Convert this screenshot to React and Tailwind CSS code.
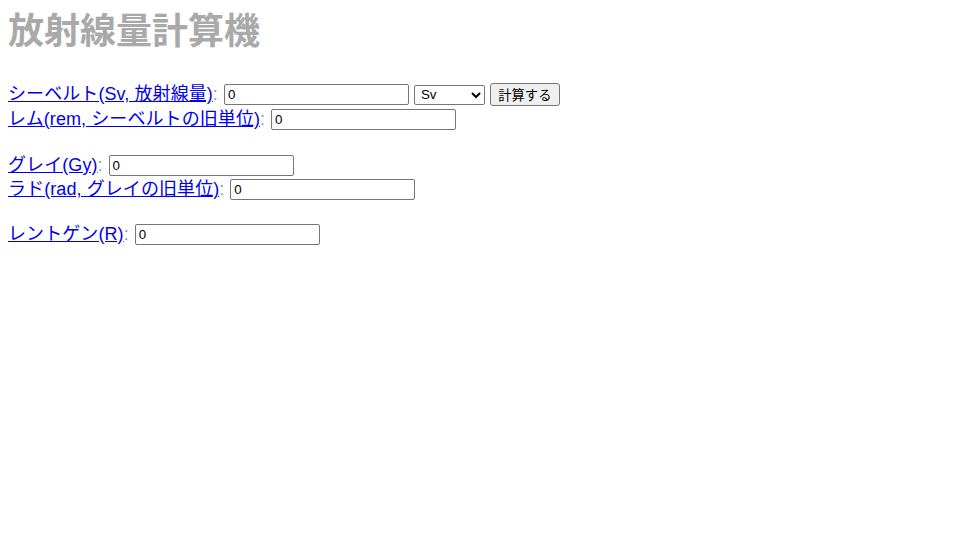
const rows = [
  { label: "シーベルト(Sv, 放射線量)", mt: "mt-[29px]", select: true },
  { label: "レム(rem, シーベルトの旧単位)", mt: "mt-0" },
  { label: "グレイ(Gy)", mt: "mt-[21px]" },
  { label: "ラド(rad, グレイの旧単位)", mt: "mt-[-1px]" },
  { label: "レントゲン(R)", mt: "mt-[20px]" },
];

const App = () => {
  return (
    <div className="min-h-screen bg-white p-2 text-[18px] text-black font-['Liberation_Sans','Noto_Sans_CJK_JP',sans-serif]">
      <h1 className="pt-[3px] text-[36px] leading-[42px] font-bold text-[#a9a9a9]">
        放射線量計算機
      </h1>

      {rows.map((row) => (
        <div key={row.label} className={`flex items-center h-[25px] ${row.mt}`}>
          <a href="#" className="text-[#0000ee] underline tracking-[0.08px]">
            {row.label}
          </a>
          <span className="text-[#999999] mr-[6px]">:</span>
          <input
            type="text"
            defaultValue="0"
            className="w-[185px] h-[21px] px-[3px] border border-[#767676] rounded-[2px] text-[13.33px] font-['Liberation_Sans',sans-serif]"
          />
          {row.select && (
            <>
              <select className="ml-[5px] w-[71px] h-[20px] border border-[#767676] rounded-[2px] text-[13.33px] font-['Liberation_Sans',sans-serif] pl-[2px] bg-white">
                <option>Sv</option>
                <option>rem</option>
                <option>Gy</option>
                <option>rad</option>
                <option>R</option>
              </select>
              <button className="ml-[5px] w-[70px] h-[23px] bg-[#efefef] border border-[#767676] rounded-[3px] text-[13.33px] font-['Noto_Sans_CJK_JP',sans-serif] leading-none">
                計算する
              </button>
            </>
          )}
        </div>
      ))}
    </div>
  );
};

export default App;
